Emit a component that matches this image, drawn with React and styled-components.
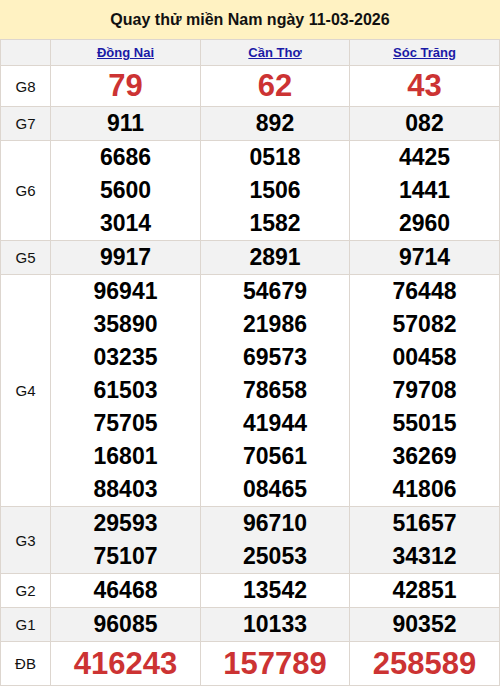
import styled, { createGlobalStyle } from "styled-components";

const provinces = ["Đồng Nai", "Cần Thơ", "Sóc Trăng"];

const prizes = [
  { label: "G8", big: true, lh: 40, values: [["79"], ["62"], ["43"]] },
  { label: "G7", lh: 33, values: [["911"], ["892"], ["082"]] },
  {
    label: "G6",
    lh: 33,
    values: [
      ["6686", "5600", "3014"],
      ["0518", "1506", "1582"],
      ["4425", "1441", "2960"],
    ],
  },
  { label: "G5", lh: 33, values: [["9917"], ["2891"], ["9714"]] },
  {
    label: "G4",
    lh: 33,
    values: [
      ["96941", "35890", "03235", "61503", "75705", "16801", "88403"],
      ["54679", "21986", "69573", "78658", "41944", "70561", "08465"],
      ["76448", "57082", "00458", "79708", "55015", "36269", "41806"],
    ],
  },
  {
    label: "G3",
    lh: 33,
    values: [
      ["29593", "75107"],
      ["96710", "25053"],
      ["51657", "34312"],
    ],
  },
  { label: "G2", lh: 33, values: [["46468"], ["13542"], ["42851"]] },
  { label: "G1", lh: 33, values: [["96085"], ["10133"], ["90352"]] },
  { label: "ĐB", big: true, lh: 43, values: [["416243"], ["157789"], ["258589"]] },
];

export default function App() {
  return (
    <>
      <GlobalStyle />
      <Wrapper>
        <Title>Quay thử miền Nam ngày 11-03-2026</Title>
        <Table>
          <colgroup>
            <col style={{ width: "50px" }} />
            <col style={{ width: "150px" }} />
            <col style={{ width: "149px" }} />
            <col style={{ width: "150px" }} />
          </colgroup>
          <thead>
            <HeadRow>
              <HeadCell />
              {provinces.map((p) => (
                <HeadCell key={p}>
                  <ProvinceLink href="#">{p}</ProvinceLink>
                </HeadCell>
              ))}
            </HeadRow>
          </thead>
          <tbody>
            {prizes.map((row, i) => (
              <PrizeRow key={row.label} $shade={i % 2 === 1}>
                <LabelCell>{row.label}</LabelCell>
                {row.values.map((col, j) => (
                  <NumberCell key={j}>
                    {col.map((n, k) => (
                      <Number key={k} $big={row.big} $lh={row.lh}>
                        {n}
                      </Number>
                    ))}
                  </NumberCell>
                ))}
              </PrizeRow>
            ))}
          </tbody>
        </Table>
      </Wrapper>
    </>
  );
}

// Styled Components

const GlobalStyle = createGlobalStyle`
  body {
    margin: 0;
    background: #ffffff;
    font-family: "Liberation Sans", Arial, sans-serif;
  }
`;

const Wrapper = styled.div`
  width: 500px;
`;

const Title = styled.div`
  height: 39px;
  background-color: #fff2c2;
  display: flex;
  align-items: center;
  justify-content: center;
  font-size: 16px;
  font-weight: 700;
  color: #111;
`;

const Table = styled.table`
  width: 500px;
  border-collapse: collapse;
  table-layout: fixed;
  border: 1px solid #ddd6cf;
`;

const HeadRow = styled.tr`
  background-color: #f2f2f2;
  height: 26px;
`;

const HeadCell = styled.th`
  border: 1px solid #ddd6cf;
  padding: 0;
  text-align: center;
  font-size: 13px;
  font-weight: 700;
`;

const ProvinceLink = styled.a`
  color: #1a1aa6;
  text-decoration: underline;
`;

const PrizeRow = styled.tr`
  background-color: ${(p) => (p.$shade ? "#f2f2f2" : "#ffffff")};
`;

const LabelCell = styled.td`
  border: 1px solid #ddd6cf;
  padding: 0;
  text-align: center;
  font-size: 15px;
  color: #111;
`;

const NumberCell = styled.td`
  border: 1px solid #ddd6cf;
  padding: 0;
  text-align: center;
`;

const Number = styled.div`
  line-height: ${(p) => p.$lh}px;
  font-size: ${(p) => (p.$big ? "31px" : "23px")};
  font-weight: 700;
  color: ${(p) => (p.$big ? "#cc3333" : "#000")};
`;
